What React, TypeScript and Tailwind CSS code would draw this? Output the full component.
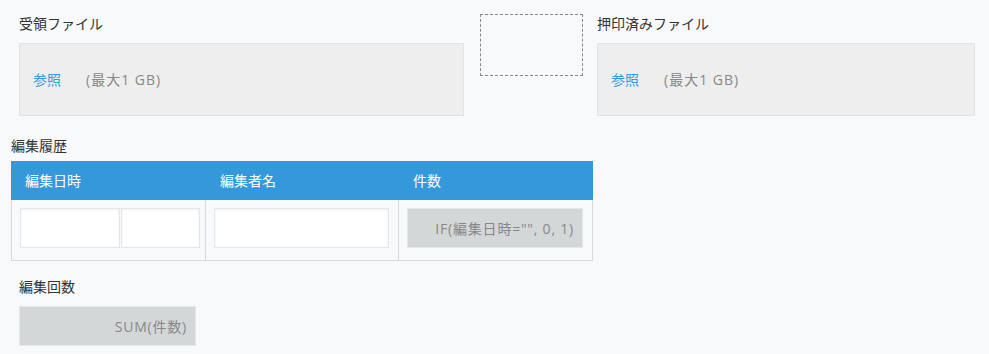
import React from 'react';

const font = { fontFamily: '"Open Sans", "Noto Sans CJK JP", sans-serif' };

const FileField: React.FC<{ label: string; width: string }> = ({ label, width }) => (
  <div className="flex flex-col">
    <div className="h-[20px] leading-[20px] text-[14px] text-[#333333]">{label}</div>
    <div className={`${width} mt-[9px] h-[73px] flex items-center bg-[#eeeeee] border border-[#e3e3e3] text-[14px]`}>
      <span className="ml-[13px] text-[#3498db]">参照</span>
      <span className="ml-[25px] text-[#888888] tracking-[1px]">(最大1 GB)</span>
    </div>
  </div>
);

const TextInput: React.FC<{ className: string }> = ({ className }) => (
  <div className={`${className} h-[40px] bg-white border border-[#e3e7e8] shadow-[inset_0_1px_3px_rgba(0,0,0,0.06)]`} />
);

export default function App() {
  return (
    <div className="w-[989px] h-[354px] bg-[#f7f9fa] overflow-hidden" style={font}>
      <div className="flex items-start pt-[14px] pl-[19px]">
        <FileField label="受領ファイル" width="w-[445px]" />
        <div className="ml-[16px] w-[103px] h-[62px] border border-dashed border-[#888888]" />
        <div className="ml-[14px]">
          <FileField label="押印済みファイル" width="w-[378px]" />
        </div>
      </div>

      <div className="pl-[11px] mt-[20px]">
        <div className="h-[20px] leading-[20px] text-[14px] text-[#333333]">編集履歴</div>
        <div className="mt-[5px] w-[582px]">
          <div className="flex h-[39px] bg-[#3498db] text-white text-[14px] items-center">
            <div className="w-[195px] pl-[14px]">編集日時</div>
            <div className="w-[193px] pl-[14px]">編集者名</div>
            <div className="w-[194px] pl-[14px]">件数</div>
          </div>
          <div className="flex h-[61px] border-x border-b border-[#d8d8d8]">
            <div className="w-[194px] flex gap-[1px] pl-[8px] pt-[8px] border-r border-[#d8d8d8]">
              <TextInput className="w-[100px]" />
              <TextInput className="w-[79px]" />
            </div>
            <div className="w-[193px] pl-[8px] pt-[8px] border-r border-[#d8d8d8]">
              <TextInput className="w-[175px]" />
            </div>
            <div className="flex-1 pl-[8px] pt-[8px]">
              <div className="w-[176px] h-[40px] bg-[#d4d7d8] border border-[#e3e7e8] flex items-center justify-end pr-[8px] text-[14px] text-[#888888] tracking-[0.8px]">
                IF(編集日時="", 0, 1)
              </div>
            </div>
          </div>
        </div>
      </div>

      <div className="pl-[19px] mt-[16px]">
        <div className="h-[20px] leading-[20px] text-[14px] text-[#333333]">編集回数</div>
        <div className="mt-[9px] w-[177px] h-[40px] bg-[#d4d7d8] border border-[#e3e7e8] flex items-center justify-end pr-[8px] text-[14px] text-[#888888] tracking-[0.8px]">
          SUM(件数)
        </div>
      </div>
    </div>
  );
}
